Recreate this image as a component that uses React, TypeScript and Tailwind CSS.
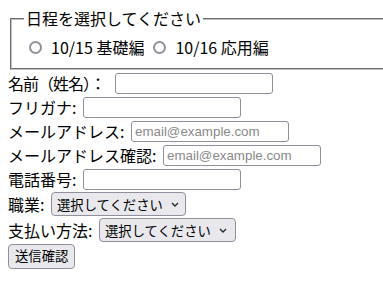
import React from "react";

const jp = "font-['Noto_Sans_CJK_JP','Noto_Sans',sans-serif]";

function Radio({ label }: { label: string }) {
  return (
    <label className="inline-flex items-center">
      <span className="ml-[5px] mr-[3px] w-[13px] h-[13px] rounded-full border-2 border-[#8f8f9d] bg-white" />
      <span className="ml-[6px]">{label}</span>
    </label>
  );
}

function TextRow({ label, width, placeholder, tight }: { label: string; width: number; placeholder?: string; tight?: boolean }) {
  return (
    <div className="flex items-center h-[24px]">
      <span className={"whitespace-nowrap " + (tight ? "tracking-[-1px]" : "")} style={{ width }}>
        {label}
      </span>
      <input
        type="text"
        placeholder={placeholder}
        className="w-[158px] h-[21px] border border-[#8f8f9d] rounded-[3px] bg-white px-[3px] text-[13.33px] font-['Liberation_Sans',sans-serif] placeholder:text-[#8a8a8a] outline-none"
      />
    </div>
  );
}

function Chevron() {
  return (
    <svg width="8" height="5" viewBox="0 0 8 5" className="ml-[8px]">
      <path d="M1 1 L4 4 L7 1" fill="none" stroke="#2b2b2b" strokeWidth="1.4" />
    </svg>
  );
}

function SelectRow({ label, width, selWidth }: { label: string; width: number; selWidth: number }) {
  return (
    <div className="flex items-center h-[26px]">
      <span className="whitespace-nowrap" style={{ width }}>
        {label}
      </span>
      <div
        className="flex items-center h-[24px] border border-[#8f8f9d] rounded-[4px] bg-[#e9e9ed] pl-[5px] text-[13.33px]"
        style={{ width: selWidth }}
      >
        <span>選択してください</span>
        <Chevron />
      </div>
    </div>
  );
}

export default function App() {
  return (
    <div className={"w-[383px] h-[301px] overflow-hidden bg-white text-black text-[16px] leading-[21px] " + jp}>
      <div className="p-[8px] pb-0 w-[440px]">
        <fieldset className="mx-[2px] border-2 [border-style:groove] border-[#c0c0c0] px-[12px] pt-[8px] pb-[10px]">
          <legend className="px-[2px]">日程を選択してください</legend>
          <div className="flex items-center h-[21px]">
            <Radio label="10/15 基礎編" />
            <span className="w-[4px]" />
            <Radio label="10/16 応用編" />
          </div>
        </fieldset>
        <div className="pt-[1px]">
          <TextRow label="名前（姓名）：" width={107} tight />
          <TextRow label="フリガナ:" width={75} />
          <TextRow label="メールアドレス:" width={123} placeholder="email@example.com" />
          <TextRow label="メールアドレス確認:" width={155} placeholder="email@example.com" />
          <TextRow label="電話番号:" width={75} />
          <SelectRow label="職業:" width={43} selWidth={135} />
          <SelectRow label="支払い方法:" width={91} selWidth={137} />
          <div className="flex items-center h-[26px]">
            <button className="h-[25px] px-[6px] border border-[#8f8f9d] rounded-[4px] bg-[#e9e9ed] text-[13.33px] leading-none">
              送信確認
            </button>
          </div>
        </div>
      </div>
    </div>
  );
}
